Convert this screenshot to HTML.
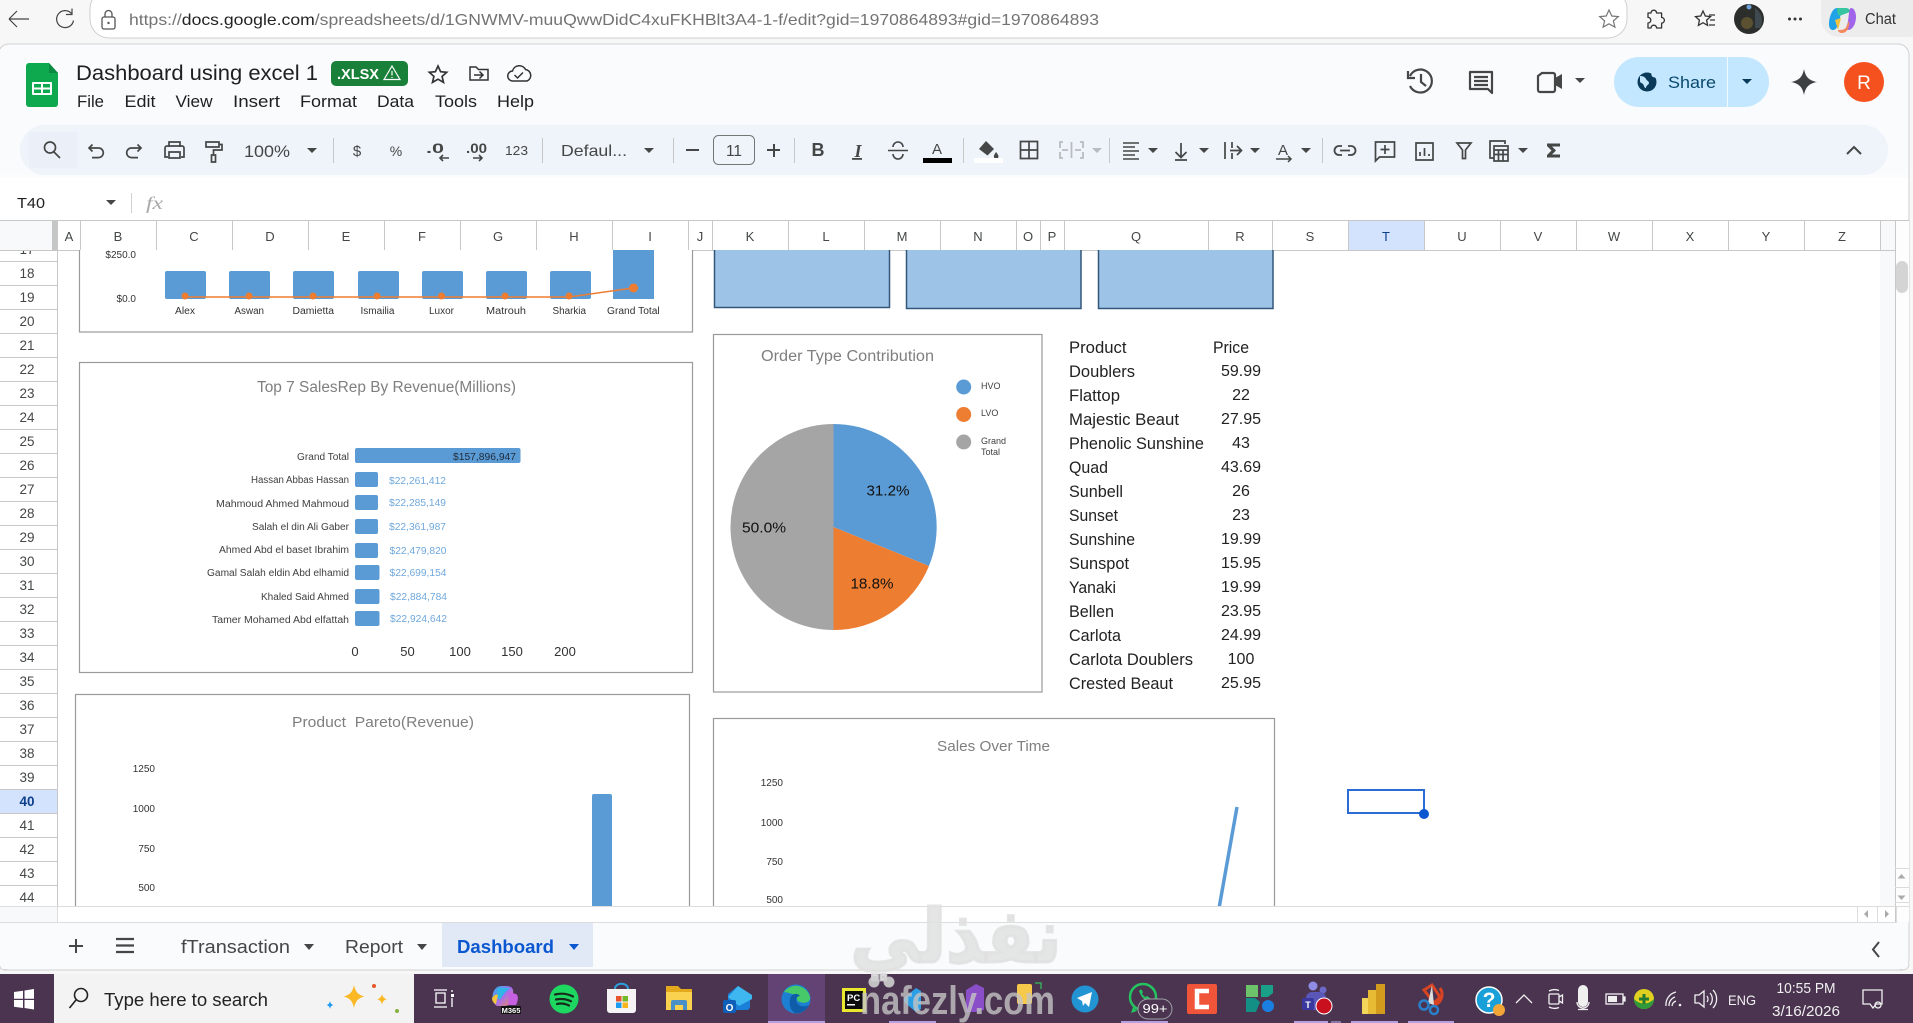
<!DOCTYPE html>
<html lang="en"><head><meta charset="utf-8"><title>Dashboard using excel 1</title>
<style>html,body{margin:0;padding:0;background:#f7f7f7;overflow:hidden}svg{display:block}text{font-family:"Liberation Sans","DejaVu Sans",sans-serif}</style></head>
<body>
<svg xmlns="http://www.w3.org/2000/svg" width="1913" height="1023" viewBox="0 0 1913 1023">
<defs>
<linearGradient id="pg" x1="0" y1="0" x2="0" y2="1"><stop offset="0" stop-color="#f9fbfd"/><stop offset=".8" stop-color="#f9fbfd"/><stop offset="1" stop-color="#fff"/></linearGradient>
<clipPath id="grid"><rect x="57" y="250" width="1824" height="656"/></clipPath>
<clipPath id="r17"><rect x="0" y="251" width="57" height="10"/></clipPath>
<linearGradient id="cop" x1="0" y1="0" x2="1" y2="1"><stop offset="0" stop-color="#27b3e8"/><stop offset=".5" stop-color="#a46ef0"/><stop offset="1" stop-color="#f08a5d"/></linearGradient>
</defs>
<rect width="1913" height="1023" fill="#f7f7f7"/>

<!-- browser chrome -->
<g fill="none" stroke="#444" stroke-width="1.200">
<path d="M9 19H29M9 19l8-8M9 19l8 8"/>
<path d="M71.500 13.500a8.500 8.500 0 1 0 2 7M72 8.500v6h-6"/>
</g>
<rect x="90" y="-10" width="1537" height="48" rx="19" fill="#fff" stroke="#cfcfcf"/>
<g fill="none" stroke="#555" stroke-width="1.300"><rect x="102" y="17" width="13" height="12" rx="2"/><path d="M105 17v-3a3.500 3.500 0 0 1 7 0v3"/></g><circle cx="108.500" cy="23" r="1.200" fill="#555"/>
<text x="129" y="25" font-size="16" fill="#737373" textLength="970" lengthAdjust="spacingAndGlyphs">https://<tspan fill="#222">docs.google.com</tspan>/spreadsheets/d/1GNWMV-muuQwwDidC4xuFKHBlt3A4-1-f/edit?gid=1970864893#gid=1970864893</text>
<g fill="none" stroke="#777" stroke-width="1.200"><path d="M1609 10l2.800 6 6.500.6-4.900 4.300 1.500 6.300-5.900-3.400-5.900 3.400 1.500-6.300-4.900-4.300 6.500-.6z"/></g>
<g fill="none" stroke="#333" stroke-width="1.300"><path d="M1648 13h3a2.800 2.800 0 0 1 5.600 0h5v4.500a2.800 2.800 0 0 1 0 5.600v4.900h-5a2.800 2.800 0 0 0-5.600 0h-3v-5a2.800 2.800 0 0 0 0-5.600z" stroke-linejoin="round"/>
<path d="M1703 11l2.300 5 5.200.6-3.900 3.500 1 5.300-4.600-2.700-4.600 2.700 1-5.300-3.900-3.500 5.200-.6zM1709 15h6M1710 20h5M1709 25h6"/></g>
<circle cx="1749" cy="19" r="15" fill="#2c2e2c"/><circle cx="1747" cy="23" r="6" fill="#5b5030"/><circle cx="1749" cy="7" r="2.500" fill="#6b9fd6"/><path d="M1755 8a15 15 0 0 1 5 20h-5z" fill="#3e4a50"/>
<g fill="#333"><circle cx="1789.500" cy="19" r="1.500"/><circle cx="1795" cy="19" r="1.500"/><circle cx="1800.500" cy="19" r="1.500"/></g>
<rect x="1821" y="-15" width="105" height="52" rx="18" fill="#ececec"/>
<path d="M1833 30c-3 0-4-3-4-6 0-6 3-16 8-16h9c-4 0-5 5-6 10-1 6-3 12-7 12z" fill="#1fa2e8"/><path d="M1837 8h9c3 0 4 2 4 4l-8 3c-3 1-5 1-5-7z" fill="#36c5a0"/><path d="M1851 8c3 0 5 4 5 9 0 6-3 13-8 13h-6c4 0 5-4 6-9 1-6 1-13 3-13z" fill="#a064ea"/><path d="M1838 30c4 0 8 0 9-5l2-4c1 4-1 12-7 12-2 0-4-1-4-3z" fill="#f48a5c"/><path d="M1835 20l6-2-3 12z" fill="#f4c13e"/>
<text x="1865" y="24" font-size="15.500" fill="#333" textLength="31" lengthAdjust="spacingAndGlyphs">Chat</text>

<!-- page -->
<rect x="-2" y="44" width="1911" height="926" rx="11" fill="#f9fbfd" stroke="#d2d2d2"/>
<rect x="0" y="125" width="1908" height="60" fill="url(#pg)"/>
<rect x="0" y="178" width="1908" height="728" fill="#fff"/>
<rect x="20" y="125" width="1868" height="50" rx="25" fill="#eff3fa"/>
<path d="M29 132h48v36H29z" fill="#ebf0f8"/>

<!-- sheets logo -->
<path d="M29 63H49L58 73V104a3 3 0 0 1-3 3H29a3 3 0 0 1-3-3V66a3 3 0 0 1 3-3z" fill="#0ea84f"/><path d="M49 63l9 10h-9z" fill="#0b8a42"/>
<rect x="32" y="82" width="20" height="13" rx="1" fill="#fff"/><g fill="#0ea84f"><rect x="34" y="84" width="7" height="3.500"/><rect x="43" y="84" width="7" height="3.500"/><rect x="34" y="89.500" width="7" height="3.500"/><rect x="43" y="89.500" width="7" height="3.500"/></g>

<text x="76" y="80" font-size="21" fill="#1f1f1f" textLength="242" lengthAdjust="spacingAndGlyphs">Dashboard using excel 1</text>
<rect x="331" y="61" width="77" height="25" rx="5" fill="#188038"/>
<text x="337" y="79" font-size="14.500" font-weight="bold" fill="#fff" textLength="42" lengthAdjust="spacingAndGlyphs">.XLSX</text>
<path d="M392 66l8 13.500h-16zM392 71v4.500M392 77v1" fill="none" stroke="#fff" stroke-width="1.200"/>
<path d="M438 66l2.600 5.700 6.100.6-4.600 4.100 1.400 6-5.500-3.200-5.500 3.200 1.400-6-4.600-4.100 6.100-.6z" fill="none" stroke="#333" stroke-width="1.700"/>
<path d="M470 67h6l2.500 2.500H488V80h-18zM474 75h9M479.500 71.500l3.500 3.500-3.500 3.500" fill="none" stroke="#333" stroke-width="1.500"/>
<path d="M513 81a5 5 0 0 1-.5-10 7 7 0 0 1 13-1.500 6 6 0 0 1 1.500 11.500zM514.500 75l3 3 5.500-5.500" fill="none" stroke="#333" stroke-width="1.500"/>

<g font-size="17" fill="#1f1f1f">
<text x="77" y="107" textLength="27" lengthAdjust="spacingAndGlyphs">File</text>
<text x="124.500" y="107" textLength="31" lengthAdjust="spacingAndGlyphs">Edit</text>
<text x="175.500" y="107" textLength="37" lengthAdjust="spacingAndGlyphs">View</text>
<text x="233" y="107" textLength="47" lengthAdjust="spacingAndGlyphs">Insert</text>
<text x="300" y="107" textLength="57" lengthAdjust="spacingAndGlyphs">Format</text>
<text x="377" y="107" textLength="37" lengthAdjust="spacingAndGlyphs">Data</text>
<text x="435" y="107" textLength="42" lengthAdjust="spacingAndGlyphs">Tools</text>
<text x="497" y="107" textLength="37" lengthAdjust="spacingAndGlyphs">Help</text>
</g>

<!-- top right -->
<g fill="none" stroke="#444746" stroke-width="2.200">
<path d="M1410 76a11.500 11.500 0 1 1 0 10M1408 71v7h7M1421 74v8l5 4"/>
<path d="M1470 72h22v21l-4-4h-18zM1474 77h14M1474 81h14M1474 85h14" stroke-linejoin="round"/>
<path d="M1538 76l4-3h11a2 2 0 0 1 2 2v15a2 2 0 0 1-2 2h-13a2 2 0 0 1-2-2z"/>
</g>
<path d="M1555 78l7-4v15l-7-4z" fill="#444746"/>
<path d="M1575 78h10l-5 5z" fill="#444746"/>
<rect x="1614" y="57" width="155" height="50" rx="25" fill="#c2e7ff"/><rect x="1727" y="57" width="1" height="50" fill="#f2faff"/>
<circle cx="1647" cy="82" r="9.500" fill="#0b3a59"/><path d="M1640 76c3 0 5 1 6 3s3 2 3 4-3 2-3 5c-2 0-2-3-3-4s-3-1-3-3zM1651 73c1 2 0 3 2 4l3 1c0-2-2-4-5-5z" fill="#c2e7ff"/>
<text x="1668" y="88" font-size="17" fill="#0b4a6e" textLength="48" lengthAdjust="spacingAndGlyphs">Share</text>
<path d="M1742 79h10l-5 5z" fill="#0b3a59"/>
<path d="M1804 69c1.500 8 5 11.500 13 13-8 1.500-11.500 5-13 13-1.500-8-5-11.500-13-13 8-1.500 11.500-5 13-13z" fill="#3c4043"/>
<circle cx="1864" cy="82" r="20" fill="#f4511e"/><text x="1864" y="89" font-size="19" fill="#fff" text-anchor="middle">R</text>

<!-- toolbar icons -->
<g fill="none" stroke="#444746" stroke-width="1.700">
<circle cx="50" cy="147.500" r="5.500"/><path d="M54 152l6 6"/>
<path d="M90 148h8.500a4.800 4.800 0 0 1 0 9.600H92M92.500 144.500l-3.500 3.500 3.500 3.500"/>
<path d="M140 148h-8.500a4.800 4.800 0 0 0 0 9.600H138M137.500 144.500l3.500 3.500-3.500 3.500"/>
<path d="M169 147v-5h11v5M168 157h-3v-9a2 2 0 0 1 2-2h15a2 2 0 0 1 2 2v9h-3M169 152h11v6h-11z"/>
<path d="M206 142h13v5h-13zM219 144.500h3v5.500h-8.500v5M211.500 155h4v7h-4z"/>
<path d="M1029 141v18M1020 150h18M1020.500 141.500h17v17h-17z"/>
<path d="M1123 143h16M1123 147h12M1123 151h16M1123 155h12M1123 159h16" stroke-width="1.600"/>
<path d="M1181 143v14M1175.500 152l5.500 5.500 5.500-5.500M1175 160h12"/>
<path d="M1225 142v17M1230 150.500h11M1237 146l4.500 4.500-4.500 4.500M1232 142v6M1232 153v6"/>
<path d="M1342 146h-3a4.500 4.500 0 0 0 0 9h3M1348 146h3a4.500 4.500 0 0 1 0 9h-3M1340 150.500h10" stroke-width="1.800"/>
<path d="M1375.500 142h19v15h-15l-4 4zM1385 145v9M1380.500 149.500h9"/>
<path d="M1416 143h17v17h-17zM1420 156v-4M1424.500 156v-8M1429 156v-2"/>
<path d="M1457 143h14l-5.500 7v8.500h-3V150z"/>
<path d="M1494 158h-4v-17h15v3M1494 146h14v15h-14zM1494 150h14M1494 154.500h14M1498.500 150v11M1503 150v11"/>
</g>
<path d="M1547 143.500h13v3h-8l4 4-4 4h8v3h-13v-2.500l4.500-4.500-4.500-4.500z" fill="#444746"/>
<path d="M1847 154l7-7 7 7" fill="none" stroke="#444746" stroke-width="2"/>
<g fill="#444746">
<path d="M307 148h10l-5 5zM644 148h10l-5 5zM1148 148h10l-5 5zM1199 148h10l-5 5zM1250 148h10l-5 5zM1301 148h10l-5 5zM1518 148h10l-5 5z"/>
<path d="M1092 148h10l-5 5z" fill="#b9bcbf"/>
<rect x="333" y="138" width="1" height="25" fill="#c7c7c7"/><rect x="542" y="138" width="1" height="25" fill="#c7c7c7"/><rect x="673" y="138" width="1" height="25" fill="#c7c7c7"/><rect x="794" y="138" width="1" height="25" fill="#c7c7c7"/><rect x="963" y="138" width="1" height="25" fill="#c7c7c7"/><rect x="1109" y="138" width="1" height="25" fill="#c7c7c7"/><rect x="1322" y="138" width="1" height="25" fill="#c7c7c7"/>
<rect x="686" y="149" width="13" height="2"/><rect x="767" y="149" width="13" height="2"/><rect x="773" y="144" width="2" height="13"/>
</g>
<g fill="#444746">
<text x="244" y="157" font-size="17" textLength="46" lengthAdjust="spacingAndGlyphs">100%</text>
<text x="357" y="156" font-size="15" text-anchor="middle">$</text>
<text x="396" y="156" font-size="14" text-anchor="middle">%</text>
<text x="426" y="153" font-size="13.500" font-weight="bold" textLength="18" lengthAdjust="spacingAndGlyphs">.0</text>
<path d="M440 158h9M443 155l-3 3 3 3" fill="none" stroke="#444746" stroke-width="1.600"/>
<text x="466" y="153" font-size="13.500" font-weight="bold" textLength="21" lengthAdjust="spacingAndGlyphs">.00</text>
<path d="M473 158h9M479 155l3 3-3 3" fill="none" stroke="#444746" stroke-width="1.600"/>
<text x="505" y="155" font-size="13" textLength="23" lengthAdjust="spacingAndGlyphs">123</text>
<text x="561" y="156" font-size="16" textLength="66" lengthAdjust="spacingAndGlyphs">Defaul...</text>
<text x="734" y="156" font-size="15.500" text-anchor="middle">11</text>
<text x="818" y="156" font-size="18" font-weight="bold" text-anchor="middle">B</text>
<text x="858" y="157" font-size="18" font-weight="bold" font-style="italic" text-anchor="middle" style='font-family:"Liberation Serif",serif'>I</text>
<rect x="852" y="158" width="10" height="1.800"/>
<path d="M888 150.500h20" stroke="#444746" stroke-width="1.600"/><path d="M893 147a5 5 0 0 1 10 0M893 154a5 5 0 0 0 10 0" fill="none" stroke="#444746" stroke-width="1.600"/>
<text x="937" y="154" font-size="15" text-anchor="middle">A</text>
<rect x="923" y="158" width="29" height="5" fill="#000"/>
<path d="M979 149l7-8 8 8-6.500 6.500zM996 152c2 2.500 2.500 3.500 2.500 4.500a2.300 2.300 0 0 1-4.600 0c0-1 .5-2 2.100-4.500z"/>
<rect x="974" y="158" width="29" height="5" fill="#fff"/>
<text x="1283" y="155" font-size="15" text-anchor="middle">A</text>
<path d="M1276 159h14M1288 156l3 3-3 3" fill="none" stroke="#444746" stroke-width="1.500"/>
</g>
<rect x="713.500" y="135.500" width="41" height="29" rx="5" fill="none" stroke="#747775"/>
<g fill="none" stroke="#b9bcbf" stroke-width="1.800"><path d="M1063 142h-3v6M1060 152v6h3M1080 142h3v6M1083 152v6h-3M1062 150h6M1081 150h-6M1071.500 142v16"/></g>

<!-- name box / fx -->
<text x="17" y="208" font-size="14.500" fill="#1f1f1f" textLength="28" lengthAdjust="spacingAndGlyphs">T40</text>
<path d="M106 200h10l-5 5z" fill="#444746"/><rect x="131" y="193" width="1" height="20" fill="#d0d0d0"/>
<text x="146" y="209" font-size="18" font-style="italic" fill="#a8a8a8" style='font-family:"Liberation Serif",serif' textLength="17" lengthAdjust="spacingAndGlyphs">fx</text>

<!-- headers -->
<rect x="0" y="220" width="1881" height="30" fill="#fff"/>
<rect x="0" y="220" width="52" height="30" fill="#f8f9fa"/><rect x="52" y="220" width="5" height="30" fill="#c4c7c5"/>
<rect x="1880" y="220" width="15" height="686" fill="#f8f9fa"/>
<rect x="1895" y="220" width="14" height="702" fill="#fdfdfd"/>
<rect x="1348" y="220" width="77" height="30" fill="#d3e3fd"/>
<rect x="0" y="789" width="57" height="24" fill="#d3e3fd"/>
<g stroke="#c8c8c8" stroke-width="1" fill="none">
<path d="M0 220.500H1909M0 250.500H1895"/>
<path d="M57.500 220V906M80.500 220v30M156.500 220v30M232.500 220v30M308.500 220v30M384.500 220v30M460.500 220v30M536.500 220v30M612.500 220v30M688.500 220v30M712.500 220v30M788.500 220v30M864.500 220v30M940.500 220v30M1016.500 220v30M1040.500 220v30M1064.500 220v30M1208.500 220v30M1272.500 220v30M1348.500 220v30M1424.500 220v30M1500.500 220v30M1576.500 220v30M1652.500 220v30M1728.500 220v30M1804.500 220v30M1880.500 220v30M1895.500 220V922"/>
<path d="M0 261.500h57M0 285.500h57M0 309.500h57M0 333.500h57M0 357.500h57M0 381.500h57M0 405.500h57M0 429.500h57M0 453.500h57M0 477.500h57M0 501.500h57M0 525.500h57M0 549.500h57M0 573.500h57M0 597.500h57M0 621.500h57M0 645.500h57M0 669.500h57M0 693.500h57M0 717.500h57M0 741.500h57M0 765.500h57M0 789.500h57M0 813.500h57M0 837.500h57M0 861.500h57M0 885.500h57"/>
</g>
<g font-size="13" fill="#444746" text-anchor="middle">
<text x="69" y="241">A</text><text x="118" y="241">B</text><text x="194" y="241">C</text><text x="270" y="241">D</text><text x="346" y="241">E</text><text x="422" y="241">F</text><text x="498" y="241">G</text><text x="574" y="241">H</text><text x="650" y="241">I</text><text x="700" y="241">J</text><text x="750" y="241">K</text><text x="826" y="241">L</text><text x="902" y="241">M</text><text x="978" y="241">N</text><text x="1028" y="241">O</text><text x="1052" y="241">P</text><text x="1136" y="241">Q</text><text x="1240" y="241">R</text><text x="1310" y="241">S</text><text x="1386" y="241" fill="#0b3f8a">T</text><text x="1462" y="241">U</text><text x="1538" y="241">V</text><text x="1614" y="241">W</text><text x="1690" y="241">X</text><text x="1766" y="241">Y</text><text x="1842" y="241">Z</text>
</g>
<g font-size="13.500" fill="#444746" text-anchor="middle">
<text x="27" y="254" clip-path="url(#r17)">17</text><text x="27" y="278">18</text><text x="27" y="302">19</text><text x="27" y="326">20</text><text x="27" y="350">21</text><text x="27" y="374">22</text><text x="27" y="398">23</text><text x="27" y="422">24</text><text x="27" y="446">25</text><text x="27" y="470">26</text><text x="27" y="494">27</text><text x="27" y="518">28</text><text x="27" y="542">29</text><text x="27" y="566">30</text><text x="27" y="590">31</text><text x="27" y="614">32</text><text x="27" y="638">33</text><text x="27" y="662">34</text><text x="27" y="686">35</text><text x="27" y="710">36</text><text x="27" y="734">37</text><text x="27" y="758">38</text><text x="27" y="782">39</text><text x="27" y="806" font-weight="bold" fill="#0b3f8a">40</text><text x="27" y="830">41</text><text x="27" y="854">42</text><text x="27" y="878">43</text><text x="27" y="902">44</text>
</g>
<rect x="1896" y="261" width="12" height="32" rx="6" fill="#d4d4d4"/>

<g clip-path="url(#grid)">
<!-- chart 1 -->
<rect x="79.500" y="200" width="613" height="132" fill="#fff" stroke="#9a9a9a" stroke-width="1.200"/>
<g fill="#5b9bd5">
<rect x="165" y="271" width="41" height="28" rx="2"/><rect x="229" y="271" width="41" height="28" rx="2"/><rect x="293" y="271" width="41" height="28" rx="2"/><rect x="358" y="271" width="41" height="28" rx="2"/><rect x="422" y="271" width="41" height="28" rx="2"/><rect x="486" y="271" width="41" height="28" rx="2"/><rect x="550" y="271" width="41" height="28" rx="2"/><rect x="613" y="240" width="41" height="59"/>
</g>
<path d="M185 297H569L633 288" fill="none" stroke="#ed7d31" stroke-width="1.500"/>
<g fill="#ed7d31"><circle cx="185" cy="296" r="3.500"/><circle cx="249" cy="296" r="3.500"/><circle cx="313" cy="296" r="3.500"/><circle cx="377" cy="296" r="3.500"/><circle cx="441.500" cy="296" r="3.500"/><circle cx="505" cy="296" r="3.500"/><circle cx="569" cy="296" r="3.500"/><circle cx="633.500" cy="288" r="4.500"/></g>
<g font-size="10" fill="#333">
<text x="136" y="258" text-anchor="end">$250.0</text><text x="136" y="302" text-anchor="end">$0.0</text>
<text x="175" y="314" textLength="20" lengthAdjust="spacingAndGlyphs">Alex</text>
<text x="234.500" y="314" textLength="29.500" lengthAdjust="spacingAndGlyphs">Aswan</text>
<text x="292.500" y="314" textLength="41.500" lengthAdjust="spacingAndGlyphs">Damietta</text>
<text x="360.500" y="314" textLength="34" lengthAdjust="spacingAndGlyphs">Ismailia</text>
<text x="429" y="314" textLength="25" lengthAdjust="spacingAndGlyphs">Luxor</text>
<text x="486" y="314" textLength="40" lengthAdjust="spacingAndGlyphs">Matrouh</text>
<text x="552.500" y="314" textLength="33.500" lengthAdjust="spacingAndGlyphs">Sharkia</text>
<text x="607" y="314" textLength="52.700" lengthAdjust="spacingAndGlyphs">Grand Total</text>
</g>

<!-- chart 2 -->
<rect x="79.500" y="362.500" width="613" height="310" fill="#fff" stroke="#9a9a9a" stroke-width="1.200"/>
<text x="257" y="392" font-size="15.500" fill="#7f7f7f" textLength="259" lengthAdjust="spacingAndGlyphs">Top 7 SalesRep By Revenue(Millions)</text>
<g fill="#5b9bd5">
<rect x="355" y="448" width="165.500" height="15" rx="2"/><rect x="355" y="472" width="23" height="15" rx="2"/><rect x="355" y="495" width="23" height="15" rx="2"/><rect x="355" y="519" width="23" height="15" rx="2"/><rect x="355" y="543" width="23" height="15" rx="2"/><rect x="355" y="565" width="24.500" height="15" rx="2"/><rect x="355" y="589" width="24.500" height="15" rx="2"/><rect x="355" y="611" width="24.500" height="15" rx="2"/>
</g>
<g font-size="10" fill="#404040" text-anchor="end">
<text x="349" y="460" textLength="52" lengthAdjust="spacingAndGlyphs">Grand Total</text>
<text x="349" y="483" textLength="98" lengthAdjust="spacingAndGlyphs">Hassan Abbas Hassan</text>
<text x="349" y="507" textLength="133" lengthAdjust="spacingAndGlyphs">Mahmoud Ahmed Mahmoud</text>
<text x="349" y="530" textLength="97" lengthAdjust="spacingAndGlyphs">Salah el din Ali Gaber</text>
<text x="349" y="553" textLength="130" lengthAdjust="spacingAndGlyphs">Ahmed Abd el baset Ibrahim</text>
<text x="349" y="576" textLength="142" lengthAdjust="spacingAndGlyphs">Gamal Salah eldin Abd elhamid</text>
<text x="349" y="600" textLength="88" lengthAdjust="spacingAndGlyphs">Khaled Said Ahmed</text>
<text x="349" y="623" textLength="137" lengthAdjust="spacingAndGlyphs">Tamer Mohamed Abd elfattah</text>
</g>
<text x="453" y="460" font-size="10" fill="#1f2a3a" textLength="63" lengthAdjust="spacingAndGlyphs">$157,896,947</text>
<g font-size="10" fill="#6fa8dc">
<text x="389" y="484" textLength="57" lengthAdjust="spacingAndGlyphs">$22,261,412</text>
<text x="389" y="506" textLength="57" lengthAdjust="spacingAndGlyphs">$22,285,149</text>
<text x="389" y="530" textLength="57" lengthAdjust="spacingAndGlyphs">$22,361,987</text>
<text x="389.500" y="554" textLength="57" lengthAdjust="spacingAndGlyphs">$22,479,820</text>
<text x="389.500" y="576" textLength="57" lengthAdjust="spacingAndGlyphs">$22,699,154</text>
<text x="390" y="600" textLength="57" lengthAdjust="spacingAndGlyphs">$22,884,784</text>
<text x="390" y="622" textLength="57" lengthAdjust="spacingAndGlyphs">$22,924,642</text>
</g>
<g font-size="13" fill="#333" text-anchor="middle">
<text x="355" y="656">0</text><text x="407.500" y="656">50</text><text x="460" y="656">100</text><text x="512" y="656">150</text><text x="565" y="656">200</text>
</g>

<!-- chart 3 -->
<rect x="75.500" y="694.500" width="614" height="260" fill="#fff" stroke="#9a9a9a" stroke-width="1.200"/>
<text x="292" y="727" font-size="15" fill="#7f7f7f" textLength="182" lengthAdjust="spacingAndGlyphs" xml:space="preserve">Product  Pareto(Revenue)</text>
<g font-size="10" fill="#333" text-anchor="end"><text x="155" y="772">1250</text><text x="155" y="812">1000</text><text x="155" y="852">750</text><text x="155" y="891">500</text></g>
<path d="M592 796a2 2 0 0 1 2-2h16a2 2 0 0 1 2 2v120h-20z" fill="#5b9bd5"/>

<!-- KPI boxes -->
<g fill="#9dc3e6" stroke="#33577c" stroke-width="1.500">
<rect x="714.500" y="230" width="175" height="77.500"/><rect x="906.500" y="230" width="174.500" height="78.500"/><rect x="1098.500" y="230" width="174.500" height="78.500"/>
</g>

<!-- pie chart -->
<rect x="713.500" y="334.500" width="328.500" height="357.500" fill="#fff" stroke="#9a9a9a" stroke-width="1.200"/>
<text x="761" y="361" font-size="15.500" fill="#7f7f7f" textLength="173" lengthAdjust="spacingAndGlyphs">Order Type Contribution</text>
<path d="M833.500 527V424A103 103 0 0 1 929 566z" fill="#5b9bd5"/>
<path d="M833.500 527L929 566A103 103 0 0 1 833.500 630z" fill="#ed7d31"/>
<path d="M833.500 527V630A103 103 0 0 1 833.500 424z" fill="#a5a5a5"/>
<g font-size="15" fill="#111" text-anchor="middle"><text x="888" y="495.500" textLength="43" lengthAdjust="spacingAndGlyphs">31.2%</text><text x="872" y="588.500" textLength="43" lengthAdjust="spacingAndGlyphs">18.8%</text><text x="764" y="532.500" textLength="44" lengthAdjust="spacingAndGlyphs">50.0%</text></g>
<circle cx="963.700" cy="387" r="7.500" fill="#5b9bd5"/><circle cx="963.700" cy="414.500" r="7.500" fill="#ed7d31"/><circle cx="963.700" cy="442" r="7.500" fill="#a5a5a5"/>
<g font-size="9" fill="#404040"><text x="981" y="389">HVO</text><text x="981" y="416">LVO</text><text x="981" y="444">Grand</text><text x="981" y="455">Total</text></g>

<!-- table -->
<g font-size="16.500" fill="#222">
<text x="1069" y="353" textLength="57.500" lengthAdjust="spacingAndGlyphs">Product</text>
<text x="1069" y="377" textLength="66" lengthAdjust="spacingAndGlyphs">Doublers</text>
<text x="1069" y="401" textLength="51" lengthAdjust="spacingAndGlyphs">Flattop</text>
<text x="1069" y="425" textLength="110" lengthAdjust="spacingAndGlyphs">Majestic Beaut</text>
<text x="1069" y="449" textLength="135" lengthAdjust="spacingAndGlyphs">Phenolic Sunshine</text>
<text x="1069" y="473" textLength="39" lengthAdjust="spacingAndGlyphs">Quad</text>
<text x="1069" y="497" textLength="54" lengthAdjust="spacingAndGlyphs">Sunbell</text>
<text x="1069" y="521" textLength="49" lengthAdjust="spacingAndGlyphs">Sunset</text>
<text x="1069" y="545" textLength="66" lengthAdjust="spacingAndGlyphs">Sunshine</text>
<text x="1069" y="569" textLength="60" lengthAdjust="spacingAndGlyphs">Sunspot</text>
<text x="1069" y="593" textLength="47" lengthAdjust="spacingAndGlyphs">Yanaki</text>
<text x="1069" y="617" textLength="45" lengthAdjust="spacingAndGlyphs">Bellen</text>
<text x="1069" y="641" textLength="52" lengthAdjust="spacingAndGlyphs">Carlota</text>
<text x="1069" y="665" textLength="124" lengthAdjust="spacingAndGlyphs">Carlota Doublers</text>
<text x="1069" y="689" textLength="104" lengthAdjust="spacingAndGlyphs">Crested Beaut</text>
<text x="1213" y="353" textLength="36" lengthAdjust="spacingAndGlyphs">Price</text>
</g>
<g font-size="16" fill="#222" text-anchor="middle">
<text x="1241" y="376">59.99</text><text x="1241" y="400">22</text><text x="1241" y="424">27.95</text><text x="1241" y="448">43</text><text x="1241" y="472">43.69</text><text x="1241" y="496">26</text><text x="1241" y="520">23</text><text x="1241" y="544">19.99</text><text x="1241" y="568">15.95</text><text x="1241" y="592">19.99</text><text x="1241" y="616">23.95</text><text x="1241" y="640">24.99</text><text x="1241" y="664">100</text><text x="1241" y="688">25.95</text>
</g>

<!-- sales over time -->
<rect x="713.500" y="718.500" width="561" height="260" fill="#fff" stroke="#9a9a9a" stroke-width="1.200"/>
<text x="937" y="751" font-size="15" fill="#7f7f7f" textLength="113" lengthAdjust="spacingAndGlyphs">Sales Over Time</text>
<g font-size="10" fill="#333" text-anchor="end"><text x="783" y="786">1250</text><text x="783" y="826">1000</text><text x="783" y="865">750</text><text x="783" y="903">500</text></g>
<path d="M1237 807L1218 914" fill="none" stroke="#5b9bd5" stroke-width="3.500"/>

<!-- selection -->
<rect x="1348" y="790" width="76" height="23" fill="none" stroke="#2b6cd4" stroke-width="2"/>
</g>
<circle cx="1424" cy="814" r="5" fill="#0b57d0"/>

<!-- hscroll + tabs -->
<rect x="0" y="906" width="1895" height="16" fill="#fff"/>
<rect x="0" y="906" width="57" height="16" fill="#f8f9fa"/>
<path d="M0 906.500H1909M0 922.500H1897M57.500 906V922M1857.500 906v16M1877.500 906v16M1896.500 906v16" stroke="#dcdcdc" fill="none"/>
<path d="M1868 910v8l-4-4zM1885 910v8l4-4zM1901.500 874l4 4.500h-8zM1901.500 900l4-4.500h-8z" fill="#aaa"/>
<path d="M1895 868.500h14M1895 887.500h14M1895 902.500h14" stroke="#dcdcdc"/>
<rect x="0" y="923" width="1908" height="46" fill="#f9fbfd"/>
<path d="M0 966a4 4 0 0 0 4 4h1899a6 6 0 0 0 6-6" fill="none" stroke="#d2d2d2"/>
<rect x="442" y="923" width="151" height="44" fill="#e1e9f7"/>
<path d="M76 939v14M69 946h14" stroke="#444746" stroke-width="2" fill="none"/>
<path d="M116 939h18M116 945.500h18M116 952h18" stroke="#444746" stroke-width="2.200" fill="none"/>
<text x="181" y="953" font-size="18" fill="#444746" textLength="109" lengthAdjust="spacingAndGlyphs">fTransaction</text>
<text x="345" y="953" font-size="18" fill="#444746" textLength="58" lengthAdjust="spacingAndGlyphs">Report</text>
<text x="457" y="953" font-size="18" font-weight="bold" fill="#0b57d0" textLength="97" lengthAdjust="spacingAndGlyphs">Dashboard</text>
<path d="M304 944h10l-5 6zM417 944h10l-5 6z" fill="#444746"/><path d="M569 944h10l-5 6z" fill="#0b57d0"/>
<path d="M1879 942l-6 7.500 6 7.500" fill="none" stroke="#444746" stroke-width="2"/>

<!-- taskbar -->
<rect x="0" y="974" width="1913" height="49" fill="#4a3450"/>
<rect x="54" y="974" width="360" height="49" fill="#f3f3f3"/>
<path d="M14 992l9-1.300v8H14zM24.500 990.500l9.500-1.500v9.800h-9.500zM14 1000h9v8l-9-1.300zM24.500 1000h9.500v9.500l-9.500-1.500z" fill="#fff"/>
<g fill="none" stroke="#222" stroke-width="1.600"><circle cx="81" cy="995" r="6.500"/><path d="M76 1000l-6.500 8"/></g>
<text x="104" y="1006" font-size="18" fill="#222" textLength="164" lengthAdjust="spacingAndGlyphs">Type here to search</text>
<path d="M354 985c1.500 7 4 10 10.500 11.500-6.500 1.500-9 4.500-10.500 11.500-1.500-7-4-10-10.500-11.500 6.500-1.500 9-4.500 10.500-11.500z" fill="#f9b824"/>
<path d="M382 994c.7 3 2 4.500 5 5.300-3 .7-4.300 2-5 5.500-.7-3.500-2-4.800-5-5.500 3-.8 4.300-2.300 5-5.300z" fill="#f9b824"/>
<path d="M330 1001c.5 2.500 1.500 3.500 3.500 4-2 .5-3 1.500-3.500 4-.5-2.500-1.500-3.500-3.500-4 2-.5 3-1.500 3.500-4z" fill="#1d9bf0"/>
<circle cx="374" cy="986" r="2" fill="#e8562c"/><circle cx="397" cy="1011" r="2" fill="#86b13f"/>
<!-- taskbar icons -->
<path d="M434 990h13M434 1007h13M436 993h9v10h-9zM452 990v2M452 998v9" fill="none" stroke="#fff" stroke-width="1.300"/><rect x="451" y="994" width="3" height="3" fill="#fff"/>
<path d="M493 1000c-2-8 3-14 8-14h5c5 0 8 2 7 8l-2 8c-1 4-6 4-10 4h-3c-3 0-4-3-5-6z" fill="url(#cop)"/><path d="M498 988h12c-4 3-8 8-10 12-3-1-4-8-2-12z" fill="#2fb5e6"/><path d="M508 992l8 2c3 2 2 7 0 11h-8c1-5 1-9 0-13z" fill="#c65fe0"/><path d="M492 998c2-3 4-4 6-3l-2 9c-2 0-4-3-4-6z" fill="#f2c53d"/>
<rect x="501" y="1006" width="20" height="8" rx="1" fill="#111"/><text x="511" y="1013" font-size="7.500" font-weight="bold" fill="#fff" text-anchor="middle">M365</text>
<circle cx="564" cy="999" r="14.500" fill="#1ed760"/><path d="M555 994.500c6-1.500 12-1 18 2M556 999.500c5-1 10-.7 15 1.700M557 1004c4-1 8-.5 12 1.500" fill="none" stroke="#152b1c" stroke-width="2.200" stroke-linecap="round"/>
<path d="M607 989h29v21a3 3 0 0 1-3 3h-23a3 3 0 0 1-3-3z" fill="#f5f3f4"/><path d="M615 989c0-7 13-7 13 0" fill="none" stroke="#2ba0dc" stroke-width="2"/>
<rect x="616" y="996" width="5.500" height="5.500" fill="#e8532c"/><rect x="622.500" y="996" width="5.500" height="5.500" fill="#77b82a"/><rect x="616" y="1002.500" width="5.500" height="5.500" fill="#1d9bf0"/><rect x="622.500" y="1002.500" width="5.500" height="5.500" fill="#f7b51c"/>
<path d="M666 986h12l3 3h11v21h-26z" fill="#e3a81c"/><rect x="666" y="992" width="26" height="18" fill="#fbd24f"/><path d="M671 1010v-8a2 2 0 0 1 2-2h12a2 2 0 0 1 2 2v8h-4v-5h-8v5z" fill="#4a90c8"/>
<path d="M738 986l12 8v13a3 3 0 0 1-3 3h-14c-2 0-5-2-5-4v-12z" fill="#1a7fd8"/><path d="M728 997l10-11 14 9v4l-13 7z" fill="#3eb7f0"/><rect x="723" y="1000" width="13" height="13" rx="2" fill="#0e5fb8"/><text x="729.500" y="1011" font-size="10" font-weight="bold" fill="#fff" text-anchor="middle">O</text>
<rect x="768" y="974" width="57" height="49" fill="#634274"/>
<circle cx="796" cy="999" r="14.500" fill="#1d7fd1"/><path d="M784 992a14.500 14.500 0 0 1 26 5c1 7-10 7-13 3 1-5-7-7-13-8z" fill="#47c96a"/><path d="M790 1000c0-6 7-8 10-4-4 0-5 5-2 8s8 3 11 1a14 14 0 0 1-14 8c-5-3-6-9-5-13z" fill="#0f5ca8"/>
<rect x="842" y="988" width="24" height="24" fill="#e9e82f"/><rect x="845" y="991" width="18" height="18" fill="#0c0c0c"/><text x="847" y="1001" font-size="9.500" font-weight="bold" fill="#fff">PC</text><rect x="847" y="1004" width="8" height="1.500" fill="#fff"/>
<path d="M904 998l12-10 5 3v18l-5 3-12-10z" fill="#2ba0e6"/>
<path d="M966 1012v-22l10-6 8 4v22l-8 2z" fill="#8a4fc8"/>
<rect x="1017" y="984" width="15" height="20" rx="2" fill="#f6c94a"/><path d="M1035 983h6v6" fill="none" stroke="#3aa858" stroke-width="1.500"/>
<circle cx="1085" cy="999" r="13.500" fill="#2294d4"/><path d="M1077 998l15-6-3 15-4-4-2 3-1-5z" fill="#fff"/>
<circle cx="1143" cy="997" r="13" fill="none" stroke="#25c35f" stroke-width="2.500"/><path d="M1131 1013l2-6 4 4zM1139 991c2 6 5 9 10 10l1-3-3-2-2 1-3-3 1-2-2-3z" fill="#25c35f"/>
<rect x="1138" y="999" width="34" height="20" rx="10" fill="#4a3450" stroke="#a0a0a8"/><text x="1155" y="1013" font-size="13" fill="#fff" text-anchor="middle" textLength="25" lengthAdjust="spacingAndGlyphs">99+</text>
<rect x="1187" y="984" width="30" height="30" rx="2" fill="#f0553a"/><path d="M1209 991h-12v16h12" fill="none" stroke="#fff" stroke-width="4.500"/>
<path d="M1246 985h12v12h-12z" fill="#6cc36a"/><path d="M1261 985h12v8l-5 4h-7z" fill="#1aa088"/><path d="M1246 998h9l5 4-4 10h-10z" fill="#148f86"/><circle cx="1268" cy="1006" r="6" fill="#1a7fe0"/>
<circle cx="1313" cy="986" r="4.500" fill="#8f8ce6"/><circle cx="1323" cy="990" r="3.500" fill="#6d69c9"/><rect x="1306" y="992" width="20" height="18" rx="6" fill="#5a57b8"/><rect x="1302" y="998" width="12" height="12" rx="2" fill="#3a37a0"/><text x="1308" y="1008" font-size="9" font-weight="bold" fill="#fff" text-anchor="middle">T</text>
<circle cx="1324" cy="1006" r="8" fill="#c8101f" stroke="#fff" stroke-width="1"/>
<rect x="1362" y="998" width="8" height="16" fill="#f2d55a"/><rect x="1368" y="990" width="8" height="24" fill="#e8bb35"/><rect x="1376" y="984" width="9" height="30" fill="#d39b1e"/>
<path d="M1424 990l8-5 8 12-6 6zM1440 988c4 6 2 14-5 17" fill="none" stroke="#d84422" stroke-width="3"/><path d="M1432 985l2 20-6-2z" fill="#ddd"/><circle cx="1424" cy="1005" r="4.500" fill="none" stroke="#2a7fc8" stroke-width="2.500"/><circle cx="1434" cy="1010" r="4" fill="none" stroke="#2a7fc8" stroke-width="2.500"/>
<circle cx="1489" cy="1000" r="13" fill="#19a0d8" stroke="#fff" stroke-width="1.500"/><text x="1489" y="1007" font-size="21" font-weight="bold" fill="#fff" text-anchor="middle">?</text><circle cx="1499" cy="1010" r="6" fill="#f2a638"/>
<g fill="none" stroke="#f0f0f0" stroke-width="1.300">
<path d="M1516 1003l8-8 8 8"/>
<rect x="1549" y="994" width="10" height="10" rx="1"/><path d="M1559 997l3.500-2v8l-3.500-2M1549 991a12 12 0 0 1 10-.5M1549 1007a12 12 0 0 0 10 .5"/>
<path d="M1589 1002a6 6 0 0 1-12 0M1583 1008v1.500M1578 1009.500h10"/>
<rect x="1606" y="994" width="17" height="10"/><rect x="1623.500" y="997" width="1.500" height="4" fill="#f0f0f0"/>
<path d="M1669 1006a9 9 0 0 1 6-9M1672 1006a6 6 0 0 1 4-5M1666 1006a13 13 0 0 1 10-14"/>
<path d="M1695 995h4l5-4v16l-5-4h-4zM1707 996a5 5 0 0 1 0 6M1710 993a9 9 0 0 1 0 12M1713 990a13 13 0 0 1 0 18"/>
<path d="M1863 990h19v14h-6l-3 4-3-4h-7z"/><circle cx="1878" cy="1005" r="3"/>
</g>
<path d="M1578 990a5 5 0 0 1 10 0v12a5 5 0 0 1-10 0z" fill="#f0f0f0"/><rect x="1608" y="996" width="9" height="6" fill="#f0f0f0"/>
<circle cx="1644" cy="999" r="10" fill="#e2d020"/><path d="M1634 999a10 10 0 0 0 20 0c-6 6-14 6-20 0z" fill="#2f9a3a"/><path d="M1642.500 994h3v3.500h3.500v3h-3.500v3.500h-3v-3.500h-3.500v-3h3.500z" fill="#247a2e"/>
<circle cx="1680" cy="1005" r="1.300" fill="#f0f0f0"/>
<text x="1742" y="1005" font-size="14" fill="#f0f0f0" text-anchor="middle" textLength="28" lengthAdjust="spacingAndGlyphs">ENG</text>
<text x="1806" y="993" font-size="14.500" fill="#f0f0f0" text-anchor="middle" textLength="59" lengthAdjust="spacingAndGlyphs">10:55 PM</text>
<text x="1806" y="1016" font-size="14.500" fill="#f0f0f0" text-anchor="middle" textLength="68" lengthAdjust="spacingAndGlyphs">3/16/2026</text>
<g fill="#b79ee0"><rect x="768" y="1021" width="57" height="2"/><rect x="889" y="1021" width="47" height="2"/><rect x="1121" y="1021" width="47" height="2"/><rect x="1294" y="1021" width="34" height="2"/><rect x="1331" y="1021" width="10" height="2" fill="#8a74a8"/><rect x="1351" y="1021" width="47" height="2"/><rect x="1408" y="1021" width="46" height="2"/></g>

<!-- watermark -->
<text x="956" y="962" font-size="74" font-weight="bold" fill="#e0e0e0" fill-opacity=".85" stroke="#e0e0e0" stroke-opacity=".85" stroke-width="3" text-anchor="middle" style='font-family:"DejaVu Sans",sans-serif' direction="rtl" textLength="211" lengthAdjust="spacingAndGlyphs">نفذلي</text>
<circle cx="874" cy="982" r="5.500" fill="#cfcfcf" fill-opacity=".9"/><circle cx="889" cy="982" r="5.500" fill="#cfcfcf" fill-opacity=".9"/>
<text x="860" y="1014" font-size="40" font-weight="bold" fill="#c4c4c4" fill-opacity=".8" textLength="195" lengthAdjust="spacingAndGlyphs">nafezly.com</text>
</svg>
</body></html>
